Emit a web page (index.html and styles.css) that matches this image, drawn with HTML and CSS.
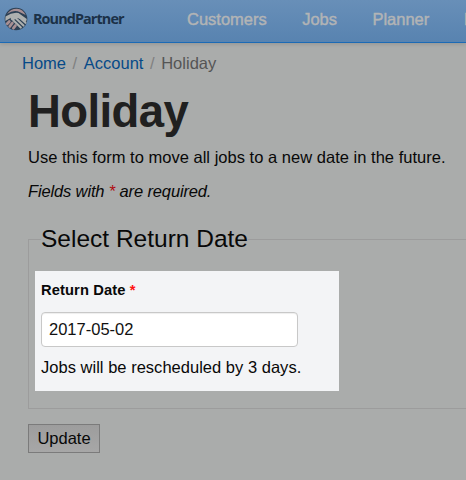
FILE: index.html
```html
<!DOCTYPE html>
<html lang="en">
<head>
<meta charset="utf-8">
<title>Holiday</title>
<link rel="stylesheet" href="styles.css">
</head>
<body>
<header class="topbar">
  <a class="brand">
    <svg class="logo" viewBox="0 0 24 24" aria-hidden="true">
      <circle cx="12" cy="12" r="11.3" fill="#2b3f54"/>
      <path d="M3 7Q7 1.5 13 1.7Q19 2 21.7 8L16 5.2Q10 2.2 3 7Z" fill="#a78f93"/>
      <path d="M1.5 9.5Q8 5 14.5 6L22.8 12L22 15L17 12L13 11L9 13.6Q5.8 13 7 10.8L1.3 14Z" fill="#adb0af"/>
      <path d="M12.5 7.8L21.5 15.8M10.5 10L19.5 18.6M9.5 13.5L16.8 20.6" stroke="#adb0af" stroke-width="2.1" stroke-linecap="round"/>
      <path d="M3.2 16.8L5.3 14.5M5.8 19.4L8.4 16M9.4 21.2L11.4 18.6" stroke="#a78f93" stroke-width="2.8" stroke-linecap="round"/>
    </svg>
    <span class="brand-name">RoundPartner</span>
  </a>
  <nav class="nav"><a>Customers</a><a>Jobs</a><a>Planner</a><a class="more">I</a></nav>
</header>
<div class="breadcrumb"><a>Home</a><i>/</i><a>Account</a><i>/</i><span>Holiday</span></div>
<main class="content">
  <h1>Holiday</h1>
  <p class="intro">Use this form to move all jobs to a new date in the future.</p>
  <p class="note">Fields with <b>*</b> are required.</p>
  <fieldset class="group">
    <legend>Select Return Date</legend>
    <div class="spotlight">
      <label for="date">Return Date <b>*</b></label>
      <input id="date" type="text" value="2017-05-02">
      <p class="hint">Jobs will be rescheduled by 3 days.</p>
    </div>
  </fieldset>
  <button class="update">Update</button>
</main>
</body>
</html>
```
FILE: styles.css
```css
* { box-sizing: border-box; }
body {
  margin: 0;
  height: 480px;
  overflow: hidden;
  background: #aaacab;
  color: #080808;
  font: 16.5px/20px "Liberation Sans", Arial, sans-serif;
}
p { margin: 0; white-space: nowrap; letter-spacing: .02px; }
.topbar {
  display: flex;
  height: 43px;
  border-bottom: 1px solid #1c6ab5;
  background: linear-gradient(#688fb8, #5883b0);
  box-shadow: 0 1px 4px rgba(0, 0, 0, .15);
}
.brand { display: flex; flex: none; width: 187px; padding: 7px 0 0 4px; }
.logo { width: 24px; height: 24px; }
.brand-name {
  margin: 2px 0 0 5px;
  color: #1b3147;
  font: bold 14.4px/20px "Open Sans", sans-serif;
  letter-spacing: -.9px;
}
.nav {
  display: flex;
  gap: 35.4px;
  overflow: hidden;
  padding-top: 9px;
  color: #b2b4b5;
  -webkit-text-stroke: .45px;
}
.nav .more { width: 2px; margin-left: -1px; }
.breadcrumb { display: flex; padding: 10px 0 0 22px; color: #555; }
.breadcrumb a { color: #064a88; }
.breadcrumb i { margin: 0 6.6px; color: #808080; font-style: normal; }
.content { padding-left: 28px; }
h1 {
  margin: 13px 0 0;
  color: #202020;
  font-size: 45.5px;
  line-height: 52px;
  letter-spacing: -.6px;
}
.intro { margin-top: 9px; }
.note { margin-top: 14px; font-style: italic; letter-spacing: -.14px; }
.note b { color: #b00b10; font-weight: normal; }
.group {
  height: 184px;
  margin: 24px -20px 0 0;
  padding: 0 0 0 6px;
  border: 1px solid #9c9c9c;
}
legend { margin-left: 6px; padding: 0; font-size: 24.5px; line-height: 28px; }
.spotlight {
  width: 304px;
  height: 120px;
  margin-top: 18px;
  padding: 9px 0 0 6px;
  background: #f3f4f6;
}
label { display: block; font-size: 14.7px; font-weight: bold; letter-spacing: .12px; }
label b { color: #f11; }
input {
  display: block;
  width: 257px;
  height: 35px;
  margin: 12px 0 10px;
  padding: 0 7px;
  border: 1px solid #c8c8c8;
  border-radius: 4px;
  background: #fff;
  box-shadow: inset 0 1px 1px #eee;
  color: #111;
  font: inherit;
}
.update {
  display: block;
  width: 72px;
  height: 29px;
  margin-top: 15px;
  padding: 0 0 2px;
  border: 1px solid #7b7b7b;
  background: linear-gradient(#9d9d9d, #a7a7a7);
  color: #080808;
  font: inherit;
}
```
